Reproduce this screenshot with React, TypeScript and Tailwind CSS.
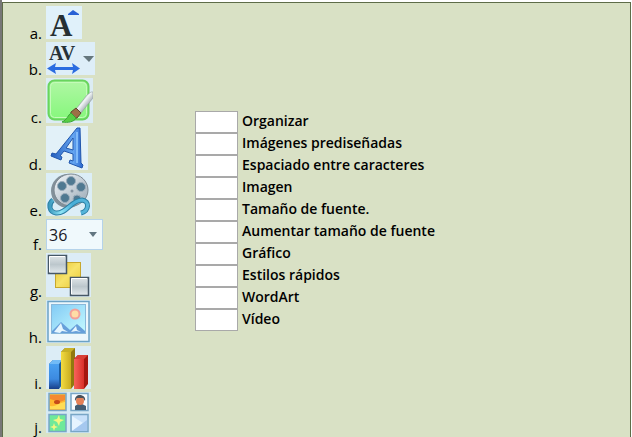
import type { ReactNode } from "react";

function GrowFontIcon() {
  return (
    <svg width="36" height="33" viewBox="0 0 36 33" className="overflow-visible bg-[#e0f1fa]" aria-hidden="true">
      <text x="4" y="30" fontFamily="Liberation Serif, serif" fontWeight="700" fontSize="31" fill="#263033">A</text>
      <path d="M22 9v-1l5-4 6 4v1z" fill="#2861d5" />
    </svg>
  );
}

function SpacingIcon() {
  return (
    <svg width="49" height="33" viewBox="0 0 49 33" className="overflow-visible bg-[#deeef8]" aria-hidden="true">
      <text x="3" y="18" fontFamily="Liberation Serif, serif" fontWeight="700" fontSize="20" fill="#263238">AV</text>
      <path d="M37 14h11l-5 6z" fill="#66777d" />
      <path d="M1 26.500 10 21l-1 4h18l-1-4 8 5.500-8 5.500 1-4H9l1 4z" fill="#2b6ce0" />
    </svg>
  );
}

function StylesIcon() {
  return (
    <svg width="47" height="45" viewBox="0 0 47 45" className="bg-[#dcecf4]" aria-hidden="true">
      <defs>
        <linearGradient id="green" x2="0" y2="1"><stop stopColor="#b0f7a4" /><stop offset="1" stopColor="#86f77c" /></linearGradient>
        <linearGradient id="steel" x2="1" y2="1"><stop offset=".2" stopColor="#68747b" /><stop offset=".45" stopColor="#f2f6f7" /><stop offset=".8" stopColor="#7c878f" /></linearGradient>
      </defs>
      <rect x="2.500" y="2.500" width="40" height="39" rx="6" fill="url(#green)" stroke="#69d45e" strokeWidth="2" />
      <rect x="4.500" y="4.500" width="36" height="35" rx="4" fill="none" stroke="#c4fbb9" />
      <path d="m30 31 11-14 4-3h2v6L35 35z" fill="url(#steel)" stroke="#8b9698" strokeWidth=".5" />
      <path d="m25 34 5-4 5 5-4 5c-4 1-7-2-6-6z" fill="#9c7045" stroke="#60472e" />
      <path d="M16 44c5-2 6-7 9-9l5 5c-2 4-8 5-14 4z" fill="#57cf45" stroke="#3aa536" />
    </svg>
  );
}

function WordArtIcon() {
  return (
    <svg width="42" height="44" viewBox="0 0 42 44" className="bg-[#e2f1f8]" aria-hidden="true">
      <defs><linearGradient id="ink"><stop stopColor="#245ebd" /><stop offset=".7" stopColor="#64a5f1" /><stop offset="1" stopColor="#2765ce" /></linearGradient></defs>
      <path fillRule="evenodd" d="M31 2h3l1 35 2 2-1 3-13-5 1-3 3 1v-7l-9-3-4 5 2 1-1 3-10-4 1-3 4 1zm-4 10-7 10 7 2z" fill="url(#ink)" stroke="#2056ad" />
      <path d="M31 6v31" stroke="#80baf9" strokeWidth="2" />
    </svg>
  );
}

function FilmIcon() {
  return (
    <svg width="46" height="43" viewBox="0 0 46 43" className="bg-[#dceef7]" aria-hidden="true">
      <defs>
        <linearGradient id="reel" x2="1" y2="1"><stop stopColor="#f2f6fa" /><stop offset="1" stopColor="#98a8b4" /></linearGradient>
        <linearGradient id="ribbon"><stop stopColor="#3f9cc0" /><stop offset=".3" stopColor="#8ee4f6" /><stop offset=".6" stopColor="#48aed8" /><stop offset="1" stopColor="#58b6da" /></linearGradient>
      </defs>
      <ellipse cx="22" cy="18" rx="17" ry="17" fill="#82909a" />
      <ellipse cx="25" cy="17" rx="17" ry="16" fill="url(#reel)" stroke="#7d8992" />
      <g fill="#4f7991" stroke="#9aacba">
        <circle cx="25" cy="8" r="4.500" /><circle cx="35" cy="14" r="4.500" /><circle cx="31" cy="26" r="4" /><circle cx="19" cy="25" r="4.500" /><circle cx="16" cy="13" r="4.500" />
      </g>
      <circle cx="26" cy="18" r="1.500" fill="#8594a2" />
      <path d="M7 27c-5 4-4 12 3 13 11 1 15-13 26-13 8 1 7 11-1 13" fill="none" stroke="#2b7fa4" strokeWidth="5" />
      <path d="M7 27c-5 4-4 12 3 13 11 1 15-13 26-13 8 1 7 11-1 13" fill="none" stroke="url(#ribbon)" strokeWidth="3" />
    </svg>
  );
}

function FontSizeSelect() {
  return (
    <span className="grid w-[57px]">
      <select aria-label="Tamaño" defaultValue="36" className="col-start-1 row-start-1 h-[31px] w-full appearance-none border border-[#b5d3ea] bg-[#f0f9fc] pl-[2px] font-['Open_Sans',sans-serif] text-[16px] font-medium text-[#17171f]">
        <option>36</option>
      </select>
      <svg width="8" height="5" viewBox="0 0 8 5" className="pointer-events-none col-start-1 row-start-1 mr-[6px] self-center justify-self-end" aria-hidden="true"><path d="M0 0h8L4 5z" fill="#627681" /></svg>
    </span>
  );
}

function ArrangeIcon() {
  return (
    <svg width="45" height="44" viewBox="0 0 45 44" className="bg-[#dcecf6]" aria-hidden="true">
      <defs>
        <linearGradient id="gray" x2="0" y2="1"><stop stopColor="#dfe5e8" /><stop offset=".5" stopColor="#bcc7cc" /><stop offset="1" stopColor="#e4eaed" /></linearGradient>
        <linearGradient id="gold" x2="1" y2="1"><stop stopColor="#e6c12c" /><stop offset=".5" stopColor="#f7e36a" /><stop offset="1" stopColor="#e9c936" /></linearGradient>
      </defs>
      <rect x="9.500" y="9.500" width="25" height="25" fill="url(#gold)" stroke="#c7a72d" />
      <rect x="2.500" y="2.500" width="18" height="18" fill="url(#gray)" stroke="#465766" strokeWidth="1.500" />
      <path d="M3.500 19V3.500H19" fill="none" stroke="#fff" />
      <rect x="24.500" y="24.500" width="18" height="18" fill="url(#gray)" stroke="#465766" strokeWidth="1.500" />
      <path d="M25.500 41V25.500H41" fill="none" stroke="#fff" />
    </svg>
  );
}

function PictureIcon() {
  return (
    <svg width="45" height="43" viewBox="0 0 45 43" className="bg-[#d6eaf5]" aria-hidden="true">
      <defs><linearGradient id="sky" x2="1" y2="1"><stop stopColor="#82caf5" /><stop offset="1" stopColor="#c5fbff" /></linearGradient></defs>
      <rect x="2" y="1.500" width="41" height="40" fill="#edf7fc" stroke="#6ca2c5" strokeWidth="1.500" />
      <rect x="5.500" y="4.500" width="34" height="29" fill="url(#sky)" stroke="#89b8da" />
      <circle cx="29" cy="14" r="4.500" fill="#ffdda6" stroke="#f2a19a" strokeWidth="2" />
      <path d="m6 31 9-9 9 8 7-6 8 7v2H6z" fill="#679fda" />
      <path d="m8 32 7-9 2 6 5 3-6-1-2 2zM25 32l5-6 1 4 4 2-5-1z" fill="#e6f6ff" />
    </svg>
  );
}

function ChartIcon() {
  return (
    <svg width="45" height="43" viewBox="0 0 45 43" className="bg-[#dcedf6]" aria-hidden="true">
      <defs>
        <linearGradient id="blueBar" x2="0" y2="1"><stop stopColor="#4aa0f0" /><stop offset=".6" stopColor="#3c8ae0" /><stop offset="1" stopColor="#173f89" /></linearGradient>
        <linearGradient id="yellowBar"><stop stopColor="#f3dc42" /><stop offset="1" stopColor="#c9ac1f" /></linearGradient>
        <linearGradient id="redBar"><stop stopColor="#f7635a" /><stop offset="1" stopColor="#d9302a" /></linearGradient>
      </defs>
      <path d="m3 18 4-4h9v25l-3 4H3z" fill="#1d5d9f" /><path d="m3 18 4-4h9l-3 4z" fill="#72bbf6" /><path d="M3 18h10v25H3z" fill="url(#blueBar)" />
      <path d="m15 6 4-4h10v36l-4 5H15z" fill="#91790e" /><path d="m15 6 4-4h10l-4 4z" fill="#c7b128" /><path d="M15 6h10v37H15z" fill="url(#yellowBar)" />
      <path d="m28 13 4-4h10v29l-4 5H28z" fill="#a5170f" /><path d="m28 13 4-4h10l-4 4z" fill="#d94037" /><path d="M28 13h10v30H28z" fill="url(#redBar)" />
    </svg>
  );
}

function ClipArtIcon() {
  return (
    <svg width="45" height="41" viewBox="0 0 45 41" className="bg-[#d6eaf4]" aria-hidden="true">
      <g stroke="#78a6c6" strokeWidth="1.500">
        <rect x="3" y="1.500" width="17" height="17" fill="#ffb72f" /><rect x="25" y="1.500" width="17" height="17" fill="#f8fcff" />
        <rect x="3" y="22.500" width="17" height="17" fill="#6ee99a" /><rect x="25" y="22.500" width="17" height="17" fill="#c8e1fa" />
      </g>
      <path d="M4 3h15v5l-5 2-10-3z" fill="#f58a30" /><path d="M4 14c7 1 10-4 15-4v7H4z" fill="#ffdc55" /><ellipse cx="11" cy="10" rx="3" ry="2" fill="#c54a19" />
      <path d="M29 18v-4l3-2h4l4 2v4z" fill="#435d73" /><circle cx="34" cy="9" r="4" fill="#e48057" /><path d="M29 9c-1-9 12-7 10 0l-2-3h-6z" fill="#49515a" />
      <path d="m13 23 1 4 4 1-4 2-1 4-2-4-4-2 4-1zM8 31l1 3 3 1-3 1-1 3-1-3-3-1 3-1z" fill="#f2f681" />
      <path d="m26 24 11 7-11 8z" fill="#e6f4ff" /><path d="m37 31-11 8h15V28z" fill="#a5c8ef" />
    </svg>
  );
}

const icons: { letter: string; icon: ReactNode }[] = [
  { letter: "a", icon: <GrowFontIcon /> },
  { letter: "b", icon: <SpacingIcon /> },
  { letter: "c", icon: <StylesIcon /> },
  { letter: "d", icon: <WordArtIcon /> },
  { letter: "e", icon: <FilmIcon /> },
  { letter: "f", icon: <FontSizeSelect /> },
  { letter: "g", icon: <ArrangeIcon /> },
  { letter: "h", icon: <PictureIcon /> },
  { letter: "i", icon: <ChartIcon /> },
  { letter: "j", icon: <ClipArtIcon /> },
];

const answers = [
  "Organizar",
  "Imágenes prediseñadas",
  "Espaciado entre caracteres",
  "Imagen",
  "Tamaño de fuente.",
  "Aumentar tamaño de fuente",
  "Gráfico",
  "Estilos rápidos",
  "WordArt",
  "Vídeo",
];

export default function App() {
  return (
    <div className="min-h-screen border-l-2 border-[#777] bg-white pt-[2px] pr-px font-['Open_Sans',sans-serif] text-black">
      <main className="flex min-h-[435px] items-start border border-b-0 border-[#5e6c48] bg-[#d9e1c5] pt-[3px]">
        <ol className="flex w-[192px] shrink-0 flex-col gap-[3px]">
          {icons.map(({ letter, icon }) => (
            <li key={letter} className="flex items-end gap-[4px]">
              <span className="h-[14px] w-[39px] text-right text-[15px] leading-[16px]">{letter}.</span>
              {icon}
            </li>
          ))}
        </ol>
        <div className="mt-[105px] flex flex-col">
          {answers.map((answer) => (
            <label key={answer} className="flex h-[22px] items-start gap-[4px] text-[14px] leading-[20px] font-semibold">
              <input type="text" maxLength={1} className="h-[22px] w-[43px] border border-[#a9a9a9] bg-white text-center" />
              {answer}
            </label>
          ))}
        </div>
      </main>
    </div>
  );
}
